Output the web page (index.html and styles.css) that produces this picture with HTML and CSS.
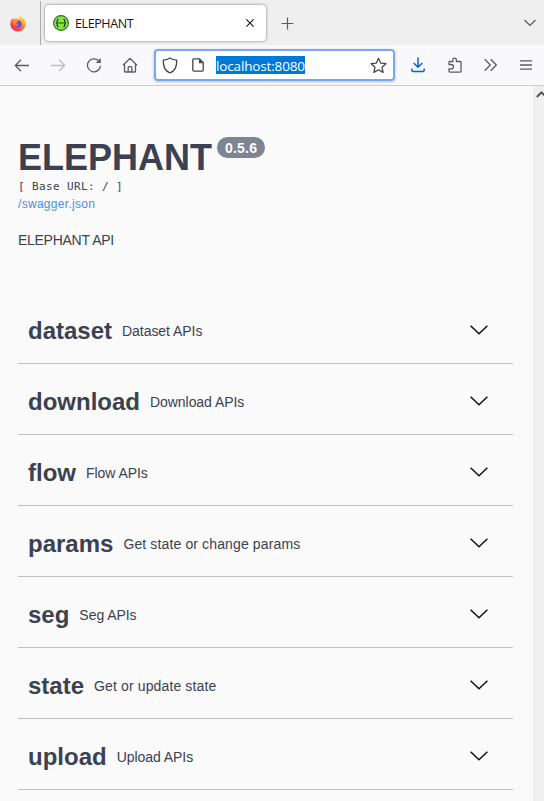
FILE: index.html
```html
<!DOCTYPE html>
<html lang="en">
<head>
<meta charset="utf-8">
<title>ELEPHANT</title>
<link rel="stylesheet" href="styles.css">
</head>
<body>
<header class="tabbar">
  <div class="pinned">
    <svg width="16" height="17" viewBox="0 0 16 17">
      <defs>
        <linearGradient id="fox" x1="0.85" y1="0" x2="0.2" y2="1">
          <stop offset="0" stop-color="#fff04a"/><stop offset=".4" stop-color="#ffa02e"/><stop offset=".7" stop-color="#ff4a3d"/><stop offset="1" stop-color="#e52a78"/>
        </linearGradient>
      </defs>
      <path d="M10.4.5c.2 1.400 1.200 2.200 2.200 3.200.3-.4.3-.8.2-1.200 1.700 1.500 2.900 3.700 2.900 6.300 0 4.300-3.400 7.700-7.700 7.700S.3 13.300.3 9.100c0-2.400.8-4.700 2.100-6.100.1.700.3 1.100.6 1.500C4 3.500 5 3.400 6 3.500c1.600-.1 2.500.4 3.300 1C9.100 3 9.400 1.600 10.400.5z" fill="url(#fox)"/>
      <circle cx="8.200" cy="8.900" r="3.500" fill="#7542e5"/>
      <path d="M2.500 5.500c1.400-.8 2.800-.4 3.700.5l2 .6c.1.800-1 1.100-1.700 1.500-.3 1.600 1.200 2.300 2.800 1.500-1 2-4.600 1.900-5.400-.3z" fill="#ff8a2b"/>
    </svg>
  </div>
  <div class="tab">
    <svg width="16" height="16" viewBox="0 0 16 16">
      <circle cx="8" cy="8" r="7.400" fill="#85ea2d" stroke="#2c653f" stroke-width="1.100"/>
      <path d="M5.600 4.300C4 4.200 4.400 5.400 4.300 6.600 4.300 7.500 3.900 8 3 8c.9 0 1.300.5 1.300 1.400.1 1.200-.3 2.400 1.300 2.300M10.400 4.300c1.600-.1 1.200 1.100 1.300 2.300 0 .9.4 1.400 1.300 1.400-.9 0-1.300.5-1.300 1.400-.1 1.200.3 2.400-1.300 2.300" fill="none" stroke="#173647" stroke-width="1.200"/>
      <path d="M5.500 8h5" stroke="#173647" stroke-width="1.300" stroke-dasharray="1.200 .7"/>
    </svg>
    <span class="tab-title">ELEPHANT</span>
    <svg class="tab-close" width="8" height="8" viewBox="0 0 8 8"><path d="M.4.400l7.200 7.200M7.600.400L.4 7.600" stroke="#15141a" stroke-width="1.100"/></svg>
  </div>
  <svg class="new-tab" width="13" height="13" viewBox="0 0 13 13"><path d="M6.500 .5v12M.5 6.500h12" stroke="#5b5b66" stroke-width="1.200"/></svg>
  <svg class="all-tabs" width="12" height="8" viewBox="0 0 12 8"><path d="M.5 1L6 6.400 11.500 1" fill="none" stroke="#5b5b66" stroke-width="1.300"/></svg>
</header>
<nav class="toolbar">
  <div class="nav-buttons">
    <svg width="16" height="16" viewBox="0 0 16 16" class="icon"><path d="M15 8.500H1.500M7 2.800L1.300 8.500 7 14.200"/></svg>
    <svg width="16" height="16" viewBox="0 0 16 16" class="icon disabled"><path d="M1 8.500h13.500M9 2.800l5.700 5.700L9 14.200"/></svg>
    <svg width="16" height="16" viewBox="0 0 16 16" class="icon"><path d="M12.600 3.700A6.500 6.500 0 1 0 14.500 8.700"/><path class="solid" d="M14.800 1v5h-5z"/></svg>
    <svg width="16" height="16" viewBox="0 0 16 16" class="icon"><path d="M1 8.200L8 1.400l7 6.800M2.500 7v7.200q0 .8.800.8h9.400q.8 0 .8-.8V7M6.200 15v-4.600q0-.8.800-.8h2q.8 0 .8.800V15"/></svg>
  </div>
  <div class="urlbar">
    <svg width="16" height="17" viewBox="0 0 16 17" class="icon dark"><path d="M8 1C6 2.400 3.500 3 1.300 3.200 1 8.600 2.800 13.600 8 16c5.200-2.400 7-7.400 6.700-12.800C12.500 3 10 2.400 8 1z"/></svg>
    <svg class="icon dark page-icon" width="12" height="14" viewBox="0 0 12 14"><path d="M2 .8h5.500l3.700 3.700V12q0 1.200-1.200 1.200H2Q.8 13.200.8 12V2Q.8.8 2 .8z"/><path class="solid" d="M7 .6l4.400 4.600H7z"/></svg>
    <span class="url">localhost:8080</span>
    <svg class="icon dark star" width="17" height="17" viewBox="0 0 17 17"><path d="M8.500 1.300l2.200 4.800 5.200.6-3.900 3.500 1.100 5.200-4.600-2.600-4.600 2.600L5 10.200 1.100 6.700l5.200-.6z" stroke-linejoin="round"/></svg>
  </div>
  <div class="tools">
    <svg width="14" height="16" viewBox="0 0 14 16" class="icon download"><path d="M7 .5V10M2.700 6L7 10.300 11.300 6M.8 11.500V13q0 1.500 1.500 1.500h9.400q1.500 0 1.500-1.500v-1.500"/></svg>
    <svg width="14" height="16" viewBox="0 0 14 16" class="icon"><path d="M1 7.500V5.300q0-.8.800-.8h3V3a1.800 1.800 0 0 1 3.600 0v1.500h3.800q.8 0 .8.800v9q0 .8-.8.800H1.800q-.8 0-.8-.8v-2.500h2.300a2.100 2.100 0 0 0 0-4.300z"/></svg>
    <svg width="13" height="14" viewBox="0 0 13 14" class="icon"><path d="M.7 1.200L6.300 7 .7 12.800M6.700 1.200L12.300 7l-5.600 5.800"/></svg>
    <svg width="12" height="10" viewBox="0 0 12 10" class="icon"><path d="M0 .8h12M0 5h12M0 9.200h12"/></svg>
  </div>
</nav>
<div class="viewport">
  <main class="page">
    <section class="info">
      <h1 class="title">ELEPHANT<span class="version">0.5.6</span></h1>
      <pre class="base-url">[ Base URL: / ]</pre>
      <a class="spec-link">/swagger.json</a>
      <p class="description">ELEPHANT API</p>
    </section>
    <section class="tags">
      <div class="tag"><h2>dataset</h2><span>Dataset APIs</span><svg class="chevron" width="18" height="10" viewBox="0 0 18 10"><path d="M.6.800L9 8.800 17.400.8"/></svg></div>
      <div class="tag"><h2>download</h2><span>Download APIs</span><svg class="chevron" width="18" height="10" viewBox="0 0 18 10"><path d="M.6.800L9 8.800 17.400.8"/></svg></div>
      <div class="tag"><h2>flow</h2><span>Flow APIs</span><svg class="chevron" width="18" height="10" viewBox="0 0 18 10"><path d="M.6.800L9 8.800 17.400.8"/></svg></div>
      <div class="tag"><h2>params</h2><span class="sentence">Get state or change params</span><svg class="chevron" width="18" height="10" viewBox="0 0 18 10"><path d="M.6.800L9 8.800 17.400.8"/></svg></div>
      <div class="tag"><h2>seg</h2><span>Seg APIs</span><svg class="chevron" width="18" height="10" viewBox="0 0 18 10"><path d="M.6.800L9 8.800 17.400.8"/></svg></div>
      <div class="tag"><h2>state</h2><span class="sentence">Get or update state</span><svg class="chevron" width="18" height="10" viewBox="0 0 18 10"><path d="M.6.800L9 8.800 17.400.8"/></svg></div>
      <div class="tag"><h2>upload</h2><span>Upload APIs</span><svg class="chevron" width="18" height="10" viewBox="0 0 18 10"><path d="M.6.800L9 8.800 17.400.8"/></svg></div>
    </section>
  </main>
  <aside class="scrollbar"><svg width="11" height="7" viewBox="0 0 11 7"><path d="M.8 6L5.500 1.400 10.200 6" fill="none" stroke="#505050" stroke-width="2"/></svg></aside>
</div>
</body>
</html>
```
FILE: styles.css
```css
* { box-sizing: border-box; }
body {
  margin: 0;
  height: 801px;
  display: flex;
  flex-direction: column;
  overflow: hidden;
  background: #fafafa;
  color: #3b4151;
  font-family: "Liberation Sans", Arial, sans-serif;
}
svg { display: block; flex: none; }
h1, h2, p, pre { margin: 0; }

.tabbar {
  height: 45px;
  flex: none;
  display: flex;
  align-items: center;
  background: #efefef;
}
.pinned {
  width: 41px;
  height: 44px;
  margin-top: 1px;
  padding: 14px 0 0 10px;
  border-right: 1px solid #aaa;
}
.tab {
  width: 221px;
  height: 36px;
  margin-left: 4px;
  padding: 0 12px 0 8px;
  display: flex;
  align-items: center;
  background: #fff;
  border-radius: 4px;
  box-shadow: 0 0 3px rgba(0, 0, 0, .5);
}
.tab-title {
  margin-left: 6px;
  padding-top: 2px;
  font: 12.500px/20px "Open Sans", "Noto Sans", sans-serif;
  letter-spacing: -.4px;
  color: #15141a;
}
.tab-close { margin-left: auto; }
.new-tab { margin: 2px 0 0 15px; }
.all-tabs { margin-left: auto; margin-right: 8px; }

.toolbar {
  height: 41px;
  flex: none;
  display: flex;
  align-items: center;
  background: #f9f9fb;
  border-bottom: 1px solid #ccc;
}
.nav-buttons {
  width: 154px;
  padding-left: 14px;
  display: flex;
  gap: 20px;
}
.icon { fill: none; stroke: #5b5b66; stroke-width: 1.300; }
.icon .solid { fill: #5b5b66; stroke: none; }
.icon.disabled { stroke: #bdbdc2; }
.icon.dark { stroke: #45454d; }
.icon.dark .solid { fill: #45454d; }
.icon.download { stroke: #0061e0; stroke-width: 1.500; }
.urlbar {
  width: 241px;
  height: 32px;
  padding: 0 6px;
  display: flex;
  align-items: center;
  background: #fff;
  border: 2px solid #78a9ed;
  border-radius: 4px;
  box-shadow: 0 1px 3px rgba(0, 0, 0, .25);
}
.page-icon { margin-left: 14px; }
.url {
  margin-left: 12px;
  width: 89px;
  height: 18px;
  background: #0078d7;
  color: #fff;
  font: 13.500px/20px "Open Sans", "Noto Sans", sans-serif;
  letter-spacing: -.15px;
  white-space: nowrap;
}
.star { margin-left: auto; }
.tools {
  flex: 1;
  padding: 0 12px 0 16px;
  display: flex;
  align-items: center;
  justify-content: space-between;
}

.viewport { flex: 1; min-height: 0; display: flex; }
.page { flex: 1; padding: 0 20px 0 18px; }
.scrollbar {
  width: 11px;
  padding: 5px 0 0 3px;
  overflow: hidden;
  background: #f0f0f0;
}
.info { height: 207px; padding-top: 51px; }
.title {
  display: flex;
  align-items: flex-start;
  font-size: 36px;
  line-height: 42px;
}
.version {
  height: 21px;
  margin: 0 0 0 5px;
  padding: 0 8px;
  border-radius: 11px;
  background: #7d8492;
  color: #fff;
  font-size: 14px;
  line-height: 22px;
  letter-spacing: .2px;
}
.base-url {
  font: 11px/16px "DejaVu Sans Mono", monospace;
  letter-spacing: .38px;
}
.spec-link {
  display: block;
  margin-top: 1px;
  font-size: 12px;
  line-height: 16px;
  letter-spacing: .3px;
  color: #4990e2;
}
.description { margin-top: 20px; font-size: 14px; line-height: 16px; letter-spacing: -.28px; }
.tag {
  height: 71px;
  padding: 0 25px 0 10px;
  display: flex;
  align-items: center;
  border-bottom: 1px solid #bfc0c3;
}
.tag h2 { font-size: 24px; line-height: 28px; padding-top: 6px; }
.tag span { margin-left: 10px; padding-top: 6px; font-size: 14px; line-height: 16px; letter-spacing: -.05px; }
.tag .sentence { letter-spacing: .13px; }
.chevron {
  margin: 3px 0 0 auto;
  fill: none;
  stroke: #111;
  stroke-width: 1.500;
}
```
